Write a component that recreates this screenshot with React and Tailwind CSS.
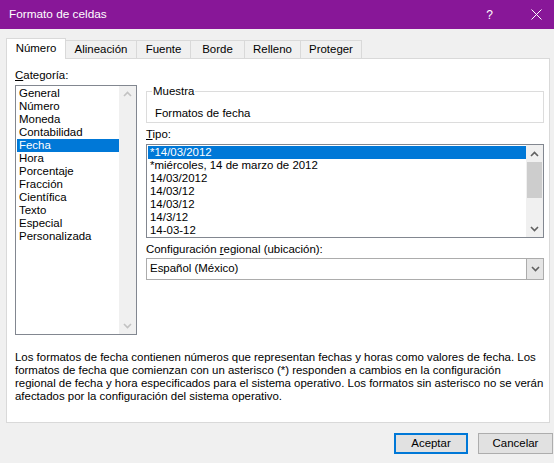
import React from 'react';

const FONT = { fontFamily: '"Liberation Sans", Arial, sans-serif' };

const categories = [
  'General', 'Número', 'Moneda', 'Contabilidad', 'Fecha', 'Hora',
  'Porcentaje', 'Fracción', 'Científica', 'Texto', 'Especial', 'Personalizada',
];

const tipos = [
  '*14/03/2012', '*miércoles, 14 de marzo de 2012', '14/03/2012',
  '14/03/12', '14/03/12', '14/3/12', '14-03-12',
];

const tabs = ['Alineación', 'Fuente', 'Borde', 'Relleno', 'Proteger'];
const tabWidths = ['w-[71px]', 'w-[54px]', 'w-[54px]', 'w-[56px]', 'w-[61px]'];

function Arrow({ up, light }) {
  return (
    <svg width="9" height="6" viewBox="0 0 9 6" className="block">
      <polyline
        points={up ? '1,5 4.5,1.5 8,5' : '1,1 4.5,4.5 8,1'}
        fill="none"
        stroke={light ? '#c2c2c2' : '#606060'}
        strokeWidth="1.6"
      />
    </svg>
  );
}

export default function App() {
  return (
    <div className="w-[554px] h-[463px] bg-[#f0f0f0] flex flex-col overflow-hidden text-[11.45px] text-black" style={FONT}>
      {/* title bar */}
      <div className="h-[29px] bg-[#881798] text-white flex items-center pl-[9px] shrink-0">
        <span className="text-[11.8px]">Formato de celdas</span>
        <span className="ml-auto text-[12px] mr-[38px]">?</span>
        <svg width="11" height="11" viewBox="0 0 11 11" className="mr-[12px]">
          <path d="M0.5 0.5 L10.5 10.5 M10.5 0.5 L0.5 10.5" stroke="#fff" strokeWidth="1" />
        </svg>
      </div>

      {/* tabs */}
      <div className="flex items-end pl-[6px] mt-[8px] h-[21px]">
        <div className="w-[60px] h-[21px] bg-white border border-b-0 border-[#d9d9d9] flex items-center justify-center pb-[1px] relative z-10 -mb-px">
          Número
        </div>
        {tabs.map((t, i) => (
          <div
            key={t}
            className={`${tabWidths[i]} h-[18px] border border-l-0 border-b-0 border-[#d9d9d9] flex items-center justify-center`}
          >
            {t}
          </div>
        ))}
      </div>

      {/* panel */}
      <div className="mx-[6px] w-[544px] h-[365px] bg-white border border-[#d9d9d9] pl-[8px] pt-[9px] shrink-0">
        <div className="flex">
          {/* categoria */}
          <div className="w-[122px]">
            <div className="leading-[14px]"><span className="underline">C</span>ategoría:</div>
            <div className="mt-[3px] h-[250px] border border-[#828790] flex">
              <div className="flex-1 pt-px pl-px">
                {categories.map((c) => (
                  <div
                    key={c}
                    className={`h-[13px] leading-[13px] pl-[2px] ${c === 'Fecha' ? 'bg-[#0078d7] text-white' : ''}`}
                  >
                    {c}
                  </div>
                ))}
              </div>
              <div className="w-[17px] bg-[#f0f0f0] flex flex-col items-center justify-between py-[5px]">
                <Arrow up light />
                <Arrow light />
              </div>
            </div>
          </div>

          {/* right column */}
          <div className="ml-[9px] w-[398px]">
            <div className="relative mt-[23px] h-[32px] border border-[#dcdcdc]">
              <span className="absolute -top-[8px] left-[5px] bg-white px-px leading-[14px]">Muestra</span>
              <div className="pl-[8px] pt-[14px] leading-[14px]">Formatos de fecha</div>
            </div>
            <div className="mt-[4px] leading-[14px]"><span className="underline">T</span>ipo:</div>
            <div className="mt-[3px] h-[94px] border border-[#828790] flex">
              <div className="flex-1 pt-px pl-px">
                {tipos.map((t, i) => (
                  <div
                    key={i}
                    className={`h-[13px] leading-[13px] pl-[2px] ${i === 0 ? 'bg-[#0078d7] text-white' : ''}`}
                  >
                    {t}
                  </div>
                ))}
              </div>
              <div className="w-[17px] bg-[#f0f0f0] flex flex-col items-center">
                <div className="h-[17px] flex items-center justify-center"><Arrow up /></div>
                <div className="w-[15px] h-[36px] bg-[#cdcdcd]" />
                <div className="flex-1" />
                <div className="h-[17px] flex items-center justify-center"><Arrow /></div>
              </div>
            </div>
            <div className="mt-[4px] leading-[14px]">
              Configuración <span className="underline">r</span>egional (ubicación):
            </div>
            <div className="mt-[2px] h-[22px] border border-[#acacac] flex items-center">
              <span className="flex-1 pl-[3px]">Español (México)</span>
              <div className="w-[17px] h-full bg-[#e5e5e5] border-l border-[#acacac] flex items-center justify-center">
                <Arrow />
              </div>
            </div>
          </div>
        </div>

        <p className="mt-[16px] leading-[13px] whitespace-nowrap">
          Los formatos de fecha contienen números que representan fechas y horas como valores de fecha. Los<br />
          formatos de fecha que comienzan con un asterisco (*) responden a cambios en la configuración<br />
          regional de fecha y hora especificados para el sistema operativo. Los formatos sin asterisco no se verán<br />
          afectados por la configuración del sistema operativo.
        </p>
      </div>

      {/* buttons */}
      <div className="flex mt-[10px] pl-[394px] gap-[10px]">
        <button className="w-[74px] h-[21px] bg-[#e1e1e1] border-2 border-[#0078d7] flex items-center justify-center">
          Aceptar
        </button>
        <button className="w-[75px] h-[21px] bg-[#e1e1e1] border border-[#adadad] flex items-center justify-center">
          Cancelar
        </button>
      </div>
    </div>
  );
}
